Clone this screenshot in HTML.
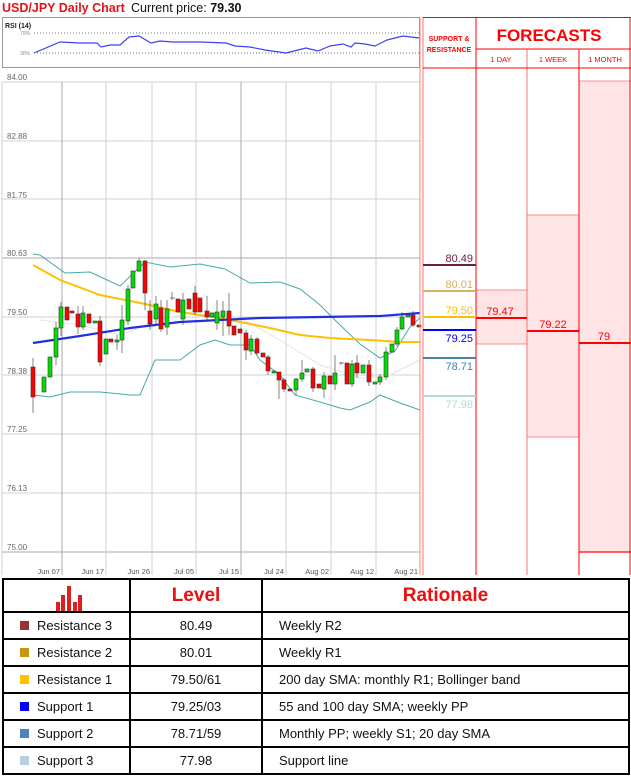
<!DOCTYPE html>
<html><head><meta charset="utf-8"><style>
*{margin:0;padding:0;box-sizing:border-box}
body{width:631px;height:777px;background:#fff;position:relative;overflow:hidden;font-family:"Liberation Sans",sans-serif}
.abs{position:absolute}
table{position:absolute;left:2px;top:578px;border-collapse:collapse;width:628px}
td{border:2px solid #000;font-size:13px;color:#111;height:27px}
</style></head><body>
<div class="abs" style="left:2px;top:1px;font-size:12.5px;font-weight:bold;color:#e8101a">USD/JPY Daily Chart</div>
<div class="abs" style="left:131px;top:1px;font-size:12.5px;color:#111">Current price: <b>79.30</b></div>

<svg class="abs" style="left:0;top:0" width="631" height="578" xmlns="http://www.w3.org/2000/svg">
<!-- RSI box -->
<rect x="2.5" y="17.5" width="417" height="50" fill="#fff" stroke="#999"/>
<text x="5" y="28" font-size="7" font-weight="bold" font-family="Liberation Sans" fill="#222">RSI (14)</text>
<text x="20" y="35" font-size="5" fill="#888" font-family="Liberation Sans">70%</text>
<text x="20" y="55" font-size="5" fill="#888" font-family="Liberation Sans">30%</text>
<line x1="34" y1="33" x2="419" y2="33" stroke="#777" stroke-dasharray="1,2"/>
<line x1="34" y1="53" x2="419" y2="53" stroke="#777" stroke-dasharray="1,2"/>
<polyline fill="none" stroke="#4040ee" stroke-width="1.2" points="34,53 60,42 80,43 97,43 101,47 110,45 120,45 129,37 139,36 151,43 160,41 173,42 200,42 226,43 235,46 250,47 265,50 286,53 306,48 318,51 330,46 343,44 351,47 355,43 365,44 375,46 387,40 403,36 419,38"/>
<!-- grid -->
<g stroke="#d0d0d0" stroke-width="1">
<line x1="2" y1="82" x2="420" y2="82"/><line x1="2" y1="141" x2="420" y2="141"/><line x1="2" y1="199" x2="420" y2="199"/><line x1="2" y1="258" x2="420" y2="258" stroke="#aaa"/><line x1="2" y1="317" x2="420" y2="317"/><line x1="2" y1="375" x2="420" y2="375"/><line x1="2" y1="434" x2="420" y2="434"/><line x1="2" y1="493" x2="420" y2="493"/><line x1="2" y1="552" x2="420" y2="552" stroke="#aaa"/>
<line x1="62" y1="82" x2="62" y2="575" stroke="#aaa"/><line x1="106" y1="82" x2="106" y2="575"/><line x1="152" y1="82" x2="152" y2="575"/><line x1="196" y1="82" x2="196" y2="575"/><line x1="241" y1="82" x2="241" y2="575" stroke="#aaa"/><line x1="286" y1="82" x2="286" y2="575"/><line x1="331" y1="82" x2="331" y2="575"/><line x1="376" y1="82" x2="376" y2="575"/>
<line x1="2" y1="82" x2="2" y2="575"/>
</g>
<g font-family="Liberation Sans" font-size="8" fill="#666">
<text x="7" y="80">84.00</text><text x="7" y="139">82.88</text><text x="7" y="198">81.75</text><text x="7" y="256">80.63</text><text x="7" y="315">79.50</text><text x="7" y="374">78.38</text><text x="7" y="432">77.25</text><text x="7" y="491">76.13</text><text x="7" y="550">75.00</text>
</g>
<g font-family="Liberation Sans" font-size="7.5" fill="#555" text-anchor="end">
<text x="60" y="574">Jun 07</text><text x="104" y="574">Jun 17</text><text x="150" y="574">Jun 26</text><text x="194" y="574">Jul 05</text><text x="239" y="574">Jul 15</text><text x="284" y="574">Jul 24</text><text x="329" y="574">Aug 02</text><text x="374" y="574">Aug 12</text><text x="418" y="574">Aug 21</text>
</g>
<!-- bollinger -->
<polyline fill="none" stroke="#4aa8a8" stroke-width="1" points="33,254 40,255 65,273 90,272 120,286 145,262 170,267 200,264 225,269 250,283 280,282 300,289 320,305 340,325 360,344 380,358 395,351 410,327 420,318"/>
<polyline fill="none" stroke="#4aa8a8" stroke-width="1" points="33,395 50,397 70,392 100,392 130,395 140,395 155,360 180,360 200,345 215,340 230,345 250,345 260,360 280,375 295,395 320,402 340,408 350,410 370,402 380,395 400,403 420,410"/>
<polyline fill="none" stroke="#e4e4e4" stroke-width="1" points="40,320 80,325 120,335 160,320 200,310 240,318 280,340 320,365 360,378 390,375 420,360"/>
<!-- MAs -->
<polyline fill="none" stroke="#ffc000" stroke-width="2" points="33,265 60,280 100,295 145,304 180,312 220,318 240,322 270,328 300,335 330,338 370,340 400,342 420,342"/>
<polyline fill="none" stroke="#2030e0" stroke-width="2.2" points="33,343 80,336 130,328 180,322 220,320 260,318 320,317 380,316 420,313"/>
<!-- candles -->
<g stroke="#333" stroke-width="0.6">
<line x1="33" y1="358" x2="33" y2="413"/><rect x="31" y="367" width="4" height="30" fill="#f00"/>
<rect x="42" y="377" width="4" height="15" fill="#0d0"/>
<rect x="48" y="357" width="4" height="20" fill="#0d0"/>
<line x1="56" y1="322" x2="56" y2="365"/><rect x="54" y="328" width="4" height="29" fill="#0d0"/>
<line x1="61" y1="302" x2="61" y2="336"/><rect x="59" y="307" width="4" height="21" fill="#0d0"/>
<rect x="65" y="307" width="4" height="13" fill="#f00"/>
<rect x="70" y="311" width="4" height="2" fill="#f00"/>
<line x1="78" y1="306" x2="78" y2="334"/><rect x="76" y="314" width="4" height="13" fill="#f00"/>
<line x1="83" y1="306" x2="83" y2="330"/><rect x="81" y="313" width="4" height="14" fill="#0d0"/>
<rect x="87" y="314" width="4" height="9" fill="#f00"/>
<rect x="93" y="321" width="4" height="2" fill="#0d0"/>
<line x1="100" y1="316" x2="100" y2="366"/><rect x="98" y="321" width="4" height="41" fill="#f00"/>
<rect x="104" y="339" width="4" height="15" fill="#0d0"/>
<rect x="109" y="339" width="4" height="3" fill="#f00"/>
<line x1="117" y1="335" x2="117" y2="350"/><rect x="115" y="340" width="4" height="2" fill="#0d0"/>
<line x1="122" y1="305" x2="122" y2="353"/><rect x="120" y="320" width="4" height="20" fill="#0d0"/>
<line x1="128" y1="285" x2="128" y2="325"/><rect x="126" y="289" width="4" height="32" fill="#0d0"/>
<rect x="131" y="271" width="4" height="17" fill="#0d0"/>
<line x1="139" y1="258" x2="139" y2="272"/><rect x="137" y="261" width="4" height="10" fill="#0d0"/>
<line x1="145" y1="260" x2="145" y2="310"/><rect x="143" y="261" width="4" height="32" fill="#f00"/>
<line x1="150" y1="300" x2="150" y2="330"/><rect x="148" y="311" width="4" height="13" fill="#f00"/>
<line x1="156" y1="296" x2="156" y2="325"/><rect x="154" y="304" width="4" height="15" fill="#0d0"/>
<line x1="161" y1="300" x2="161" y2="332"/><rect x="159" y="308" width="4" height="21" fill="#f00"/>
<line x1="167" y1="300" x2="167" y2="335"/><rect x="165" y="309" width="4" height="18" fill="#0d0"/>
<line x1="172" y1="292" x2="172" y2="300"/><line x1="170" y1="298" x2="175" y2="298"/>
<rect x="176" y="299" width="4" height="13" fill="#f00"/>
<line x1="183" y1="293" x2="183" y2="325"/><rect x="181" y="300" width="4" height="19" fill="#0d0"/>
<rect x="187" y="299" width="4" height="10" fill="#f00"/>
<line x1="195" y1="286" x2="195" y2="315"/><rect x="193" y="293" width="4" height="19" fill="#f00"/>
<rect x="198" y="298" width="4" height="14" fill="#f00"/>
<line x1="207" y1="296" x2="207" y2="320"/><rect x="205" y="311" width="4" height="6" fill="#f00"/>
<rect x="210" y="313" width="4" height="4" fill="#0d0"/>
<line x1="217" y1="300" x2="217" y2="330"/><rect x="215" y="312" width="4" height="11" fill="#0d0"/>
<line x1="223" y1="301" x2="223" y2="336"/><rect x="221" y="311" width="4" height="6" fill="#0d0"/>
<line x1="229" y1="293" x2="229" y2="335"/><rect x="227" y="311" width="4" height="15" fill="#f00"/>
<rect x="232" y="326" width="4" height="9" fill="#f00"/>
<rect x="238" y="329" width="4" height="4" fill="#f00"/>
<line x1="246" y1="330" x2="246" y2="360"/><rect x="244" y="333" width="4" height="17" fill="#f00"/>
<line x1="251" y1="335" x2="251" y2="355"/><rect x="249" y="339" width="4" height="12" fill="#0d0"/>
<line x1="257" y1="337" x2="257" y2="355"/><rect x="255" y="339" width="4" height="14" fill="#f00"/>
<rect x="261" y="353" width="4" height="4" fill="#f00"/>
<line x1="268" y1="355" x2="268" y2="375"/><rect x="266" y="357" width="4" height="14" fill="#f00"/>
<rect x="272" y="371" width="4" height="2" fill="#0d0"/>
<line x1="279" y1="372" x2="279" y2="399"/><rect x="277" y="372" width="4" height="8" fill="#f00"/>
<line x1="284" y1="378" x2="284" y2="392"/><rect x="282" y="380" width="4" height="9" fill="#f00"/>
<rect x="288" y="389" width="4" height="2" fill="#f00"/>
<line x1="296" y1="378" x2="296" y2="395"/><rect x="294" y="379" width="4" height="11" fill="#0d0"/>
<line x1="302" y1="360" x2="302" y2="382"/><rect x="300" y="373" width="4" height="6" fill="#0d0"/>
<rect x="305" y="369" width="4" height="3" fill="#0d0"/>
<line x1="313" y1="367" x2="313" y2="392"/><rect x="311" y="369" width="4" height="19" fill="#f00"/>
<rect x="317" y="384" width="4" height="4" fill="#f00"/>
<line x1="324" y1="372" x2="324" y2="398"/><rect x="322" y="376" width="4" height="13" fill="#0d0"/>
<rect x="328" y="376" width="4" height="8" fill="#f00"/>
<line x1="335" y1="355" x2="335" y2="390"/><rect x="333" y="373" width="4" height="11" fill="#0d0"/>
<line x1="341" y1="362" x2="341" y2="365"/><line x1="339" y1="363" x2="344" y2="363"/>
<rect x="345" y="363" width="4" height="21" fill="#f00"/>
<line x1="352" y1="360" x2="352" y2="387"/><rect x="350" y="364" width="4" height="20" fill="#0d0"/>
<line x1="357" y1="355" x2="357" y2="378"/><rect x="355" y="363" width="4" height="10" fill="#f00"/>
<rect x="361" y="365" width="4" height="8" fill="#0d0"/>
<line x1="369" y1="360" x2="369" y2="386"/><rect x="367" y="365" width="4" height="17" fill="#f00"/>
<rect x="373" y="382" width="4" height="2" fill="#0d0"/>
<line x1="380" y1="374" x2="380" y2="385"/><rect x="378" y="377" width="4" height="5" fill="#0d0"/>
<line x1="386" y1="347" x2="386" y2="380"/><rect x="384" y="352" width="4" height="25" fill="#0d0"/>
<rect x="390" y="344" width="4" height="8" fill="#0d0"/>
<line x1="397" y1="327" x2="397" y2="346"/><rect x="395" y="330" width="4" height="14" fill="#0d0"/>
<line x1="402" y1="312" x2="402" y2="330"/><rect x="400" y="317" width="4" height="12" fill="#0d0"/>
<rect x="406" y="315" width="4" height="2" fill="#0d0"/>
<line x1="413" y1="311" x2="413" y2="327"/><rect x="411" y="315" width="4" height="10" fill="#f00"/>
<rect x="417" y="325" width="4" height="2" fill="#f00"/>
</g>

<!-- forecast panel -->
<rect x="527" y="215" width="52" height="222" fill="#ffe4e6" stroke="#ff8c8c"/>
<rect x="579" y="81" width="51" height="471" fill="#ffe4e6"/>
<rect x="476" y="290" width="51" height="54" fill="#ffe4e6" stroke="#ff8c8c"/>
<line x1="579" y1="81" x2="631" y2="81" stroke="#ff9090"/>
<line x1="579" y1="552" x2="631" y2="552" stroke="#f00" stroke-width="1.2"/>
<line x1="423" y1="17" x2="423" y2="575" stroke="#ff7070"/>
<line x1="476" y1="17" x2="476" y2="575" stroke="#f00"/>
<line x1="527" y1="49" x2="527" y2="575" stroke="#ff7070"/>
<line x1="579" y1="49" x2="579" y2="575" stroke="#f00"/>
<line x1="630" y1="17" x2="630" y2="575" stroke="#f00"/>
<line x1="420" y1="17" x2="420" y2="575" stroke="#ff8080"/>
<line x1="423" y1="17.5" x2="631" y2="17.5" stroke="#f00"/>
<line x1="476" y1="49" x2="631" y2="49" stroke="#f00"/>
<line x1="423" y1="68" x2="631" y2="68" stroke="#f00"/>
<text x="449" y="41" text-anchor="middle" font-size="7" font-weight="bold" fill="#f00" font-family="Liberation Sans">SUPPORT &amp;</text>
<text x="449" y="52" text-anchor="middle" font-size="7" font-weight="bold" fill="#f00" font-family="Liberation Sans">RESISTANCE</text>
<text x="549" y="41" text-anchor="middle" font-size="17" font-weight="bold" fill="#f00" font-family="Liberation Sans">FORECASTS</text>
<g font-size="7.5" fill="#f00" font-family="Liberation Sans" text-anchor="middle">
<text x="501" y="62">1 DAY</text><text x="553" y="62">1 WEEK</text><text x="605" y="62">1 MONTH</text></g>
<g stroke-width="2">
<line x1="423" y1="265" x2="476" y2="265" stroke="#6b2040"/>
<line x1="423" y1="291" x2="476" y2="291" stroke="#d4b060"/>
<line x1="423" y1="317" x2="476" y2="317" stroke="#ffc000"/>
<line x1="423" y1="330" x2="476" y2="330" stroke="#0000ff"/>
<line x1="423" y1="358" x2="476" y2="358" stroke="#4682a8"/>
<line x1="423" y1="396" x2="476" y2="396" stroke="#b0dcd8"/>
<line x1="476" y1="318" x2="527" y2="318" stroke="#f00"/>
<line x1="527" y1="331" x2="579" y2="331" stroke="#f00"/>
<line x1="579" y1="343" x2="631" y2="343" stroke="#f00"/>
</g>
<g font-size="11" font-family="Liberation Sans" text-anchor="end">
<text x="473" y="262" fill="#6b2040">80.49</text>
<text x="473" y="288" fill="#d4b060">80.01</text>
<text x="473" y="314" fill="#ffc000">79.50</text>
<text x="473" y="342" fill="#0000ff">79.25</text>
<text x="473" y="370" fill="#4682a8">78.71</text>
<text x="473" y="408" fill="#b0dcd8">77.98</text>
</g>
<g font-size="11" font-family="Liberation Sans" fill="#f00" text-anchor="middle">
<text x="500" y="315">79.47</text><text x="553" y="328">79.22</text><text x="604" y="340">79</text>
</g>
</svg>

<table>
<tr style="height:33px"><td style="width:127px;position:relative">
<svg width="30" height="28" style="position:absolute;left:52px;top:3px"><g fill="#dd2020"><rect x="0" y="19" width="4" height="9"/><rect x="5" y="12" width="4" height="16"/><rect x="11" y="3" width="4" height="25"/><rect x="17" y="19" width="4" height="9"/><rect x="22" y="12" width="4" height="16"/></g></svg></td>
<td style="width:132px;text-align:center;font-size:19px;font-weight:bold;color:#e81010">Level</td>
<td style="text-align:center;font-size:19px;font-weight:bold;color:#e81010">Rationale</td></tr>
<tr><td><span style="display:inline-block;width:9px;height:9px;background:#943634;margin:0 8px 0 16px"></span>Resistance 3</td><td style="text-align:center">80.49</td><td style="padding-left:16px">Weekly R2</td></tr>
<tr><td><span style="display:inline-block;width:9px;height:9px;background:#c8960c;margin:0 8px 0 16px"></span>Resistance 2</td><td style="text-align:center">80.01</td><td style="padding-left:16px">Weekly R1</td></tr>
<tr><td><span style="display:inline-block;width:9px;height:9px;background:#ffc000;margin:0 8px 0 16px"></span>Resistance 1</td><td style="text-align:center">79.50/61</td><td style="padding-left:16px">200 day SMA: monthly R1; Bollinger band</td></tr>
<tr><td><span style="display:inline-block;width:9px;height:9px;background:#0000ff;margin:0 8px 0 16px"></span>Support 1</td><td style="text-align:center">79.25/03</td><td style="padding-left:16px">55 and 100 day SMA; weekly PP</td></tr>
<tr><td><span style="display:inline-block;width:9px;height:9px;background:#4f81bd;margin:0 8px 0 16px"></span>Support 2</td><td style="text-align:center">78.71/59</td><td style="padding-left:16px">Monthly PP; weekly S1; 20 day SMA</td></tr>
<tr><td><span style="display:inline-block;width:9px;height:9px;background:#b8cce4;margin:0 8px 0 16px"></span>Support 3</td><td style="text-align:center">77.98</td><td style="padding-left:16px">Support line</td></tr>
</table>
</body></html>
